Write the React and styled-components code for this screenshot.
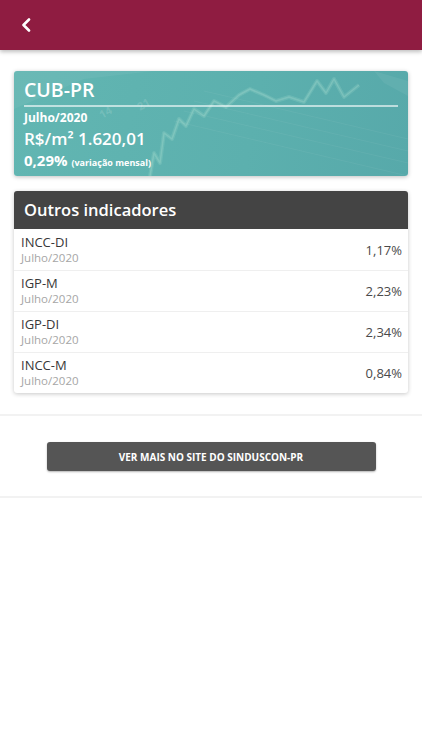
import React from "react"
import styled, { createGlobalStyle } from "styled-components"

const GlobalStyle = createGlobalStyle`
  html, body {
    margin: 0;
    padding: 0;
    background: #fff;
    font-family: "Open Sans", "Noto Sans", sans-serif;
  }
  * { box-sizing: border-box; }
`

const Page = styled.div`
  width: 422px;
  min-height: 750px;
  background: #fff;
`

const TopBar = styled.header`
  display: flex;
  align-items: center;
  height: 50px;
  padding: 0 18px;
  background: #8f1c41;
  box-shadow: 0 2px 4px rgba(0, 0, 0, 0.25);
`

const BackButton = styled.button`
  display: flex;
  align-items: center;
  justify-content: center;
  width: 16px;
  height: 24px;
  padding: 0;
  border: 0;
  background: none;
  cursor: pointer;
`

const Content = styled.main`
  display: flex;
  flex-direction: column;
  gap: 15px;
  padding: 21px 14px 21px;
`

const CubCard = styled.section`
  position: relative;
  overflow: hidden;
  height: 105px;
  padding: 5px 10px 0;
  border-radius: 3px;
  background: linear-gradient(100deg, #62b6b2 0%, #5cb0ae 60%, #57a9aa 100%);
  box-shadow: 0 1px 4px rgba(0, 0, 0, 0.25);
  color: #fff;
`

const ChartArt = styled.svg`
  position: absolute;
  inset: 0;
  width: 100%;
  height: 100%;
  pointer-events: none;
`

const CubBody = styled.div`
  position: relative;
`

const CubTitle = styled.h1`
  margin: 0;
  padding-bottom: 2px;
  border-bottom: 2px solid rgba(255, 255, 255, 0.6);
  font-size: 19.5px;
  font-weight: 600;
  line-height: 27px;
`

const CubMonth = styled.div`
  margin-top: 3px;
  font-size: 12px;
  font-weight: 700;
  line-height: 16.5px;
`

const CubPrice = styled.div`
  font-size: 17px;
  font-weight: 600;
  line-height: 23px;
`

const CubChange = styled.div`
  font-size: 15px;
  font-weight: 700;
  line-height: 20.5px;
`

const ChangeNote = styled.span`
  font-size: 9px;
  font-weight: 700;
`

const ListCard = styled.section`
  border-radius: 3px;
  background: #fff;
  box-shadow: 0 1px 4px rgba(0, 0, 0, 0.22);
`

const ListHeader = styled.h2`
  margin: 0;
  height: 38px;
  padding: 0 10px;
  border-radius: 3px 3px 0 0;
  background: #444;
  color: #fff;
  font-size: 16.5px;
  font-weight: 600;
  line-height: 38px;
`

const Row = styled.div`
  display: flex;
  align-items: center;
  justify-content: space-between;
  height: 41px;
  padding: 0 6px 0 7px;
  border-top: ${({ $first }) => ($first ? "0" : "1px solid #efefef")};
`

const RowName = styled.div`
  color: #383838;
  font-size: 13px;
  line-height: 15px;
`

const RowDate = styled.div`
  color: #a6a6a6;
  font-size: 11.5px;
  line-height: 15px;
`

const RowValue = styled.div`
  color: #4a4a4a;
  font-size: 13px;
`

const Footer = styled.div`
  display: flex;
  justify-content: center;
  padding: 26px 0 25px;
  border-top: 2px solid #f2f2f2;
  border-bottom: 2px solid #f2f2f2;
`

const SiteButton = styled.button`
  width: 329px;
  height: 29px;
  border: 0;
  border-radius: 3px;
  background: #555;
  box-shadow: 0 1px 2px rgba(0, 0, 0, 0.3);
  color: #fff;
  font-family: "Open Sans", sans-serif;
  font-size: 10px;
  font-weight: 700;
  cursor: pointer;
`

const indicators = [
  { name: "INCC-DI", date: "Julho/2020", value: "1,17%" },
  { name: "IGP-M", date: "Julho/2020", value: "2,23%" },
  { name: "IGP-DI", date: "Julho/2020", value: "2,34%" },
  { name: "INCC-M", date: "Julho/2020", value: "0,84%" },
]

const chartLine =
  "M136 105 L140 82 L146 92 L150 62 L158 68 L165 48 L172 55 L180 38 L190 45 L200 30 L212 36 L225 24 L236 18 L250 24 L262 30 L275 26 L290 31 L303 10 L312 22 L320 8 L330 26 L345 14"

const App = () => (
  <Page>
    <GlobalStyle />
    <TopBar>
      <BackButton aria-label="Voltar">
        <svg width="10" height="14" viewBox="0 0 10 14">
          <path d="M8 1.5 L2.5 7 L8 12.5" fill="none" stroke="#fff" strokeWidth="2.6" strokeLinecap="round" strokeLinejoin="round" />
        </svg>
      </BackButton>
    </TopBar>

    <Content>
      <CubCard>
        {/* faint stock-chart picture behind the figures */}
        <ChartArt viewBox="0 0 394 105" preserveAspectRatio="none">
          <path d="M0 38 L70 8 L140 0 L0 0 Z" fill="rgba(255,255,255,0.05)" />
          <path d={chartLine} fill="none" stroke="rgba(185,235,215,0.16)" strokeWidth="4" strokeLinejoin="round" />
          <path d={chartLine} fill="none" stroke="rgba(210,245,230,0.18)" strokeWidth="1.5" strokeLinejoin="round" />
          <g fill="rgba(255,255,255,0.14)" fontFamily="Open Sans" fontSize="11" fontWeight="700">
            <text x="126" y="40" transform="rotate(-30 126 40)">21</text>
            <text x="88" y="48" transform="rotate(-30 88 48)">14</text>
          </g>
          <g stroke="rgba(255,255,255,0.05)" strokeWidth="1">
            <line x1="160" y1="50" x2="394" y2="105" />
            <line x1="170" y1="40" x2="394" y2="92" />
            <line x1="180" y1="30" x2="394" y2="80" />
            <line x1="190" y1="20" x2="394" y2="68" />
          </g>
          <path d="M360 0 L394 10 L394 25 L370 12 Z" fill="rgba(255,255,255,0.06)" />
        </ChartArt>
        <CubBody>
          <CubTitle>CUB-PR</CubTitle>
          <CubMonth>Julho/2020</CubMonth>
          <CubPrice>R$/m² 1.620,01</CubPrice>
          <CubChange>
            0,29% <ChangeNote>(variação mensal)</ChangeNote>
          </CubChange>
        </CubBody>
      </CubCard>

      <ListCard>
        <ListHeader>Outros indicadores</ListHeader>
        {indicators.map(({ name, date, value }, index) => (
          <Row key={name} $first={index === 0}>
            <div>
              <RowName>{name}</RowName>
              <RowDate>{date}</RowDate>
            </div>
            <RowValue>{value}</RowValue>
          </Row>
        ))}
      </ListCard>
    </Content>

    <Footer>
      <SiteButton>VER MAIS NO SITE DO SINDUSCON-PR</SiteButton>
    </Footer>
  </Page>
)

export default App
